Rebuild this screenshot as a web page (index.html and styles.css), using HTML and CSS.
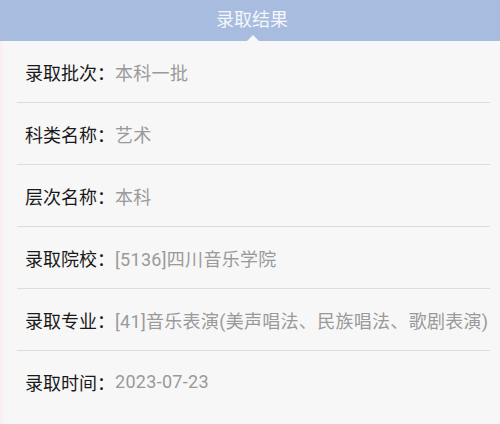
FILE: index.html
```html
<!DOCTYPE html>
<html lang="zh">
<head>
<meta charset="utf-8">
<link rel="stylesheet" href="styles.css">
</head>
<body>
<div class="page">
  <header class="header">
    <span class="title">录取结果</span>
    <span class="notch"></span>
  </header>
  <main class="list">
    <div class="row"><span class="label">录取批次：</span><span class="value">本科一批</span></div>
    <div class="row"><span class="label">科类名称：</span><span class="value">艺术</span></div>
    <div class="row"><span class="label">层次名称：</span><span class="value">本科</span></div>
    <div class="row"><span class="label">录取院校：</span><span class="value">[5136]四川音乐学院</span></div>
    <div class="row"><span class="label">录取专业：</span><span class="value">[41]音乐表演(美声唱法、民族唱法、歌剧表演)</span></div>
    <div class="row last"><span class="label">录取时间：</span><span class="value">2023-07-23</span></div>
  </main>
</div>
</body>
</html>
```
FILE: styles.css
```css
html, body {
  margin: 0;
  padding: 0;
  background: #f7f7f7;
}
body {
  font-family: Roboto, "Noto Sans CJK SC", sans-serif;
}
.page {
  width: 500px;
  height: 424px;
  overflow: hidden;
  background: #f7f7f7;
}
.header {
  position: relative;
  height: 41px;
  background: #a8bce0;
  display: flex;
  align-items: center;
  justify-content: center;
}
.title {
  color: #f4f6fb;
  font-size: 18px;
  line-height: 1;
  margin-left: 4px;
  margin-top: -1px;
}
.notch {
  position: absolute;
  left: 247px;
  bottom: 0;
  width: 0;
  height: 0;
  border-left: 6px solid transparent;
  border-right: 6px solid transparent;
  border-bottom: 6px solid #f7f7f7;
}
.list {
  padding: 0 10px 0 14px;
  border-left: 3px solid #fbf0ef;
  height: 383px;
}
.row {
  height: 61px;
  display: flex;
  align-items: center;
  padding-left: 8px;
  border-bottom: 1px solid #dcdcdc;
  font-size: 18px;
  white-space: nowrap;
}
.row.last {
  border-bottom: none;
}
.label {
  color: #1a1a1a;
}
.value {
  color: #9a9a9a;
  letter-spacing: 0.3px;
}
```
